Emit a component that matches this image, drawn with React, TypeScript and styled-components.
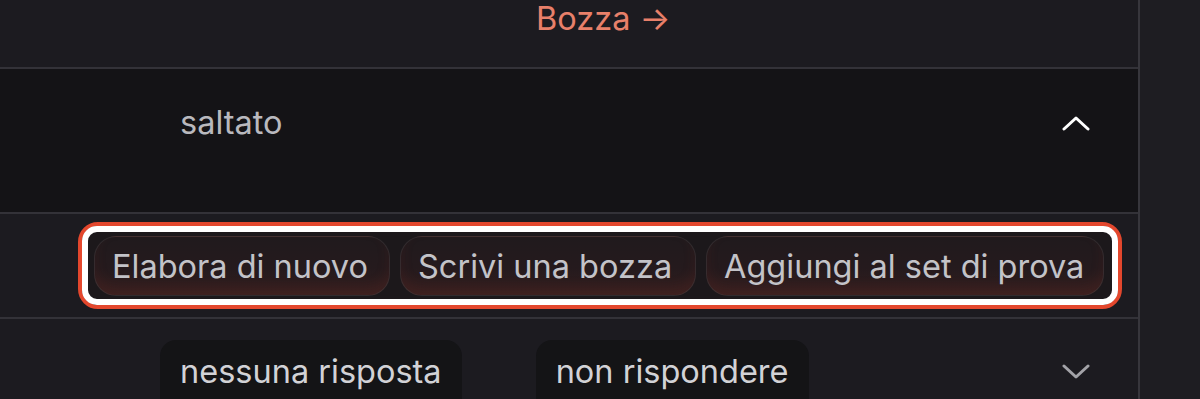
import React from "react";
import styled, { createGlobalStyle } from "styled-components";

const Global = createGlobalStyle`
  html, body { margin: 0; padding: 0; background: #1e1d22; }
  body { font-family: Inter, "Noto Sans", sans-serif; -webkit-font-smoothing: antialiased; }
`;

const Page = styled.div`
  display: flex;
  width: 1200px;
  height: 399px;
  overflow: hidden;
  background: #1e1d22;
`;

const Main = styled.div`
  width: 1138px;
  display: flex;
  flex-direction: column;
  border-right: 2px solid #37363c;
`;

const Sidebar = styled.div`
  flex: 1;
  background: #1e1d22;
`;

const Row = styled.div<{ $h: number; $bg: string; $top: number }>`
  display: flex;
  align-items: flex-start;
  flex-shrink: 0;
  height: ${(p) => p.$h}px;
  padding-top: ${(p) => p.$top}px;
  background: ${(p) => p.$bg};
  border-bottom: 2px solid #333238;
  box-sizing: border-box;
`;

const DraftLink = styled.span`
  margin-left: 536px;
  font-size: 32.5px;
  line-height: 38px;
  color: #e8806a;
`;

const Label = styled.span`
  margin-left: 180px;
  font-size: 32.5px;
  line-height: 38px;
  color: #b9b9be;
  flex: 1;
`;

const ChevronBox = styled.div`
  width: 28px;
  margin-right: 48px;
  margin-top: 11px;
  display: flex;
  justify-content: center;
`;

const Highlight = styled.div`
  margin-left: 78px;
  width: 1044px;
  border: 4px solid #e3472d;
  border-radius: 20px;
  box-sizing: border-box;
`;

const HighlightInner = styled.div`
  border: 6px solid #ffffff;
  border-radius: 15px;
  background: #1c181b;
  padding: 4px 0 3px 6px;
  display: flex;
  gap: 10px;
`;

const ActionButton = styled.button<{ $w: number }>`
  width: ${(p) => p.$w}px;
  height: 60px;
  box-sizing: border-box;
  border: 1px solid rgba(255, 255, 255, 0.08);
  border-radius: 22px;
  background: linear-gradient(180deg, #201a1d 0%, #251a1d 55%, #341f1f 100%);
  box-shadow: inset 0 -8px 12px rgba(110, 40, 35, 0.2);
  color: #c3c3c8;
  font-family: Inter, "Noto Sans", sans-serif;
  font-size: 32.5px;
  padding: 0 17px;
  text-align: left;
  white-space: nowrap;
`;

const ReplyRow = styled.div`
  display: flex;
  align-items: flex-start;
  flex: 1;
  padding-top: 21px;
  background: #1c1b20;
`;

const Pill = styled.span<{ $ml: number }>`
  margin-left: ${(p) => p.$ml}px;
  background: #141416;
  border-radius: 16px;
  padding: 13px 20px 30px;
  font-size: 32.5px;
  line-height: 38px;
  color: #d2d2d6;
  white-space: nowrap;
`;

const Spacer = styled.div`
  flex: 1;
`;

const DownChevronBox = styled.div`
  width: 28px;
  margin-right: 48px;
  margin-top: 24px;
  display: flex;
  justify-content: center;
`;

const Chevron = ({ up, color }: { up?: boolean; color: string }) => (
  <svg width="28" height="16" viewBox="0 0 28 16" fill="none">
    <path
      d={up ? "M2 14 L14 3 L26 14" : "M2 2 L14 13 L26 2"}
      stroke={color}
      strokeWidth="3"
      strokeLinecap="round"
      strokeLinejoin="round"
    />
  </svg>
);

export default function App() {
  return (
    <>
      <Global />
      <Page>
        <Main>
          <Row $h={69} $bg="#1c1b20" $top={0}>
            <DraftLink>Bozza →</DraftLink>
          </Row>
          <Row $h={145} $bg="#141316" $top={35}>
            <Label>saltato</Label>
            <ChevronBox>
              <Chevron up color="#ffffff" />
            </ChevronBox>
          </Row>
          <Row $h={105} $bg="#1c1b20" $top={8}>
            <Highlight>
              <HighlightInner>
                <ActionButton $w={296}>Elabora di nuovo</ActionButton>
                <ActionButton $w={296}>Scrivi una bozza</ActionButton>
                <ActionButton $w={398}>Aggiungi al set di prova</ActionButton>
              </HighlightInner>
            </Highlight>
          </Row>
          <ReplyRow>
            <Pill $ml={160}>nessuna risposta</Pill>
            <Pill $ml={74}>non rispondere</Pill>
            <Spacer />
            <DownChevronBox>
              <Chevron color="#a3a3a8" />
            </DownChevronBox>
          </ReplyRow>
        </Main>
        <Sidebar />
      </Page>
    </>
  );
}
